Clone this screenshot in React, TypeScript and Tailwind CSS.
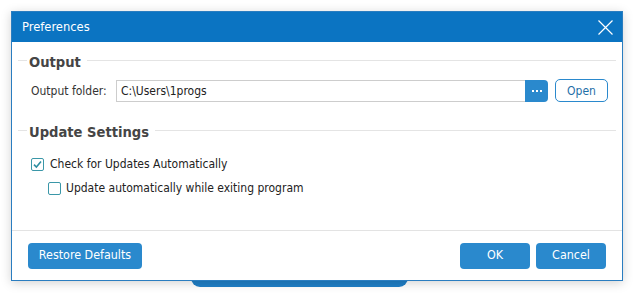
const font = { fontFamily: '"DejaVu Sans Condensed", "DejaVu Sans", Tahoma, sans-serif' };

const SectionHeader = ({ title }: { title: string }) => (
  <div className="flex items-center h-[18px] pl-[6px] pr-[6px]">
    <div className="w-[9px] h-px bg-[#e4e4e4] mt-[-3px]" />
    <span className="ml-[2px] mr-[6px] text-[14.6px] font-bold text-[#454545] leading-none">{title}</span>
    <div className="flex-1 h-px bg-[#e4e4e4] mt-[-3px]" />
  </div>
);

const CheckBox = ({ checked }: { checked?: boolean }) => (
  <span className="w-[13px] h-[13px] border border-[#3a97a8] rounded-[2px] bg-white flex items-center justify-center">
    {checked && (
      <svg width="11" height="11" viewBox="0 0 11 11">
        <path d="M2 5.6 L4.4 8 L9 2.6" fill="none" stroke="#2f8fa2" strokeWidth="1.6" />
      </svg>
    )}
  </span>
);

const App = () => {
  return (
    <div className="relative w-[636px] h-[294px] bg-white overflow-hidden text-[12px] text-[#222]" style={font}>
      {/* button of the window behind */}
      <div className="absolute left-[191px] top-[260px] w-[217px] h-[27px] rounded-b-[9px] bg-[#1f7fc7]" />

      <div className="relative z-10 ml-[11px] mt-[11px] w-[612px] h-[270px] bg-white border border-[#2a7dc0] shadow-[0_2px_10px_rgba(0,0,0,0.18)] flex flex-col">
        <div className="h-[30px] bg-[#0b74c2] flex items-center justify-between pl-[10px] pr-[9px]">
          <span className="text-white text-[12.8px]">Preferences</span>
          <svg width="15" height="15" viewBox="0 0 15 15" className="mt-[1px]">
            <path d="M0.5 0.5 L14.5 14.5 M14.5 0.5 L0.5 14.5" stroke="white" strokeWidth="1.2" fill="none" />
          </svg>
        </div>

        <div className="mt-[11px]">
          <SectionHeader title="Output" />
        </div>
        <div className="flex items-center mt-[8px] pl-[19px]">
          <span className="w-[85px] text-[#333]">Output folder:</span>
          <div className="w-[409px] h-[22px] border border-[#cdcdcd] border-r-0 flex items-center pl-[4px] text-[#222]">
            C:\Users\1progs
          </div>
          <button className="w-[23px] h-[22px] bg-[#2a89cd] rounded-r-[4px] text-white flex items-center justify-center gap-[2px]">
            <span className="w-[2px] h-[2px] bg-white" />
            <span className="w-[2px] h-[2px] bg-white" />
            <span className="w-[2px] h-[2px] bg-white" />
          </button>
          <button className="ml-[7px] w-[53px] h-[23px] border border-[#2a89cd] rounded-[5px] text-[#1f6fa8] flex items-center justify-center">
            Open
          </button>
        </div>

        <div className="mt-[21px]">
          <SectionHeader title="Update Settings" />
        </div>
        <label className="flex items-center h-[14px] mt-[16px] pl-[19px] gap-[6px]">
          <CheckBox checked />
          <span>Check for Updates Automatically</span>
        </label>
        <label className="flex items-center h-[14px] mt-[10px] pl-[36px] gap-[5px]">
          <CheckBox />
          <span>Update automatically while exiting program</span>
        </label>

        <div className="mt-auto border-t border-[#e3e3e3] h-[50px] flex items-center justify-between pl-[16px] pr-[16px] text-[12.4px]">
          <button className="h-[26px] w-[114px] rounded-[4px] bg-[#2a89cd] text-white">Restore Defaults</button>
          <div className="flex gap-[6px]">
            <button className="h-[26px] w-[70px] rounded-[4px] bg-[#2a89cd] text-white">OK</button>
            <button className="h-[26px] w-[70px] rounded-[4px] bg-[#2a89cd] text-white">Cancel</button>
          </div>
        </div>
      </div>
    </div>
  );
};

export default App;
